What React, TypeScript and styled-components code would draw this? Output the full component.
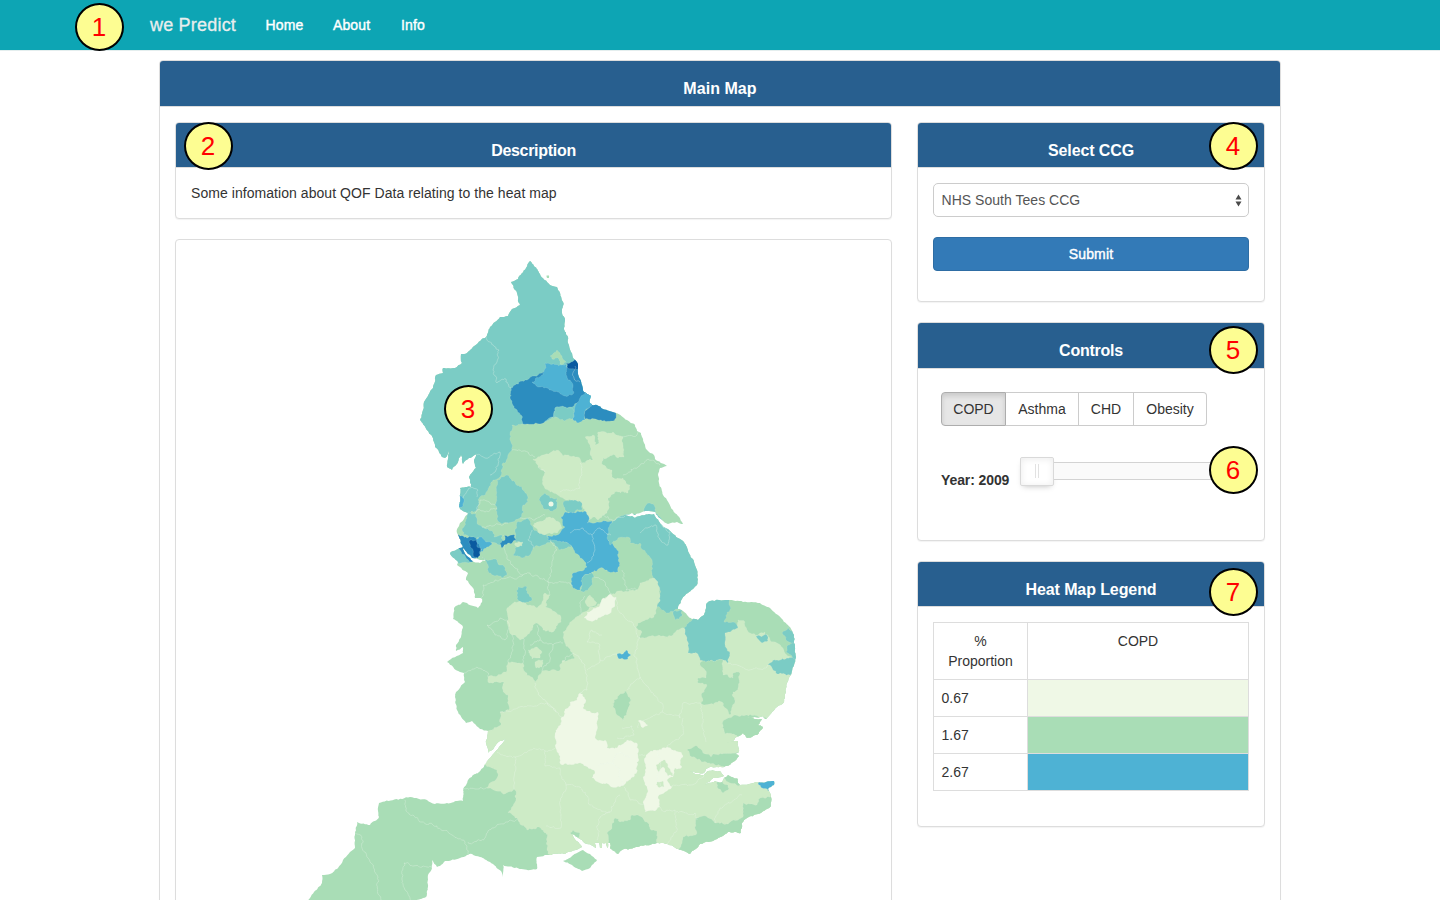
import React from 'react';
import styled, { createGlobalStyle } from 'styled-components';

const GlobalStyle = createGlobalStyle`
  *, *::before, *::after { box-sizing: border-box; }
  html, body { margin: 0; padding: 0; height: 900px; overflow: hidden; background: #fff; }
  body {
    font-family: "Liberation Sans", Arial, sans-serif;
    font-size: 14px;
    line-height: 20px;
    color: #333;
  }
`;

const Page = styled.div`
  position: relative;
  height: 900px;
  overflow: hidden;
`;

const Navbar = styled.nav`
  display: flex;
  align-items: center;
  height: 51px;
  padding-left: 150px;
  background: #0da5b4;
  border-bottom: 1px solid #e4eeee;
`;

const Brand = styled.a`
  width: 86px;
  margin-right: 29.5px;
  font-size: 18px;
  letter-spacing: 0.2px;
  white-space: nowrap;
  color: #e9eeee;
  -webkit-text-stroke: 0.3px #e9eeee;
`;

const NavLink = styled.a<{ $w: number }>`
  width: ${(p) => p.$w}px;
  margin-right: 29px;
  letter-spacing: 0.12px;
  white-space: nowrap;
  color: #fff;
  -webkit-text-stroke: 0.4px #fff;
`;

const Panel = styled.section<{ $h?: number }>`
  display: flex;
  flex-direction: column;
  height: ${(p) => (p.$h ? `${p.$h}px` : 'auto')};
  background: #fff;
  border: 1px solid #ddd;
  border-radius: 4px;
  box-shadow: 0 1px 1px rgba(0, 0, 0, 0.05);
`;

const MainPanel = styled(Panel)`
  width: 1122px;
  margin: 9px 0 0 159px;
`;

const PanelHeading = styled.h3<{ $h?: number; $spacing?: number }>`
  flex: none;
  height: ${(p) => p.$h ?? 45}px;
  margin: 0;
  padding-top: 18px;
  border-bottom: 1px solid #ddd;
  border-radius: 3px 3px 0 0;
  background: #285f8f;
  color: #fff;
  font-size: 16px;
  font-weight: 700;
  line-height: 20px;
  letter-spacing: ${(p) => p.$spacing ?? -0.1}px;
  text-align: center;
`;

const Columns = styled.div`
  display: flex;
  gap: 25px;
  padding: 15px;
`;

const MainColumn = styled.div`
  display: flex;
  flex-direction: column;
  gap: 20px;
  width: 717px;
`;

const SideColumn = styled.div`
  display: flex;
  flex-direction: column;
  gap: 20px;
  width: 348px;
`;

const PanelBody = styled.div`
  padding: 15px;
`;

const Description = styled.p`
  margin: 0;
  letter-spacing: 0.055px;
`;

const ControlsBody = styled.div`
  padding: 23px 7px 0 23px;
`;

const SelectBox = styled.div`
  display: flex;
  align-items: center;
  justify-content: space-between;
  height: 34px;
  padding: 0 6px 0 7.5px;
  border: 1px solid #ccc;
  border-radius: 5px;
  color: #555;
  letter-spacing: 0.03px;
`;

const SubmitButton = styled.button`
  display: block;
  width: 100%;
  height: 34px;
  margin-top: 20px;
  padding: 0;
  border: 1px solid #2e6da4;
  border-radius: 4px;
  background: #337ab7;
  color: #fff;
  font: inherit;
  letter-spacing: 0.12px;
  -webkit-text-stroke: 0.4px #fff;
`;

const ButtonGroup = styled.div`
  display: flex;
`;

const ToggleButton = styled.button<{ $w: number; $active?: boolean }>`
  width: ${(p) => p.$w}px;
  height: 34px;
  padding: 0;
  border: 1px solid ${(p) => (p.$active ? '#adadad' : '#ccc')};
  border-left-width: ${(p) => (p.$active ? 1 : 0)}px;
  background: ${(p) => (p.$active ? '#e6e6e6' : '#fff')};
  box-shadow: ${(p) => (p.$active ? 'inset 0 3px 5px rgba(0, 0, 0, 0.125)' : 'none')};
  color: #333;
  font: inherit;
  &:first-child { border-radius: 4px 0 0 4px; }
  &:last-child { border-radius: 0 4px 4px 0; }
`;

const YearRow = styled.div`
  display: flex;
  align-items: flex-start;
  margin-top: 31px;
`;

const YearLabel = styled.label`
  width: 79px;
  padding-top: 13px;
  font-weight: 700;
  letter-spacing: -0.1px;
  white-space: nowrap;
`;

const Slider = styled.div`
  display: flex;
  align-items: center;
  width: 226px;
  height: 28px;
`;

const SliderKnob = styled.div`
  display: flex;
  flex: none;
  align-items: center;
  justify-content: center;
  gap: 2px;
  width: 34px;
  height: 29px;
  border: 1px solid #d9d9d9;
  border-radius: 2px;
  background: #fff;
  box-shadow: inset 0 0 1px #fff, inset 0 1px 7px #ebebeb, 0 3px 6px -3px #bbb;
`;

const Grip = styled.span`
  width: 1px;
  height: 14px;
  background: #e2e2e2;
`;

const SliderTrack = styled.div`
  flex: 1;
  height: 18px;
  border: 1px solid #d3d3d3;
  border-left: 0;
  background: #fafafa;
`;

const LegendTable = styled.table`
  width: 316px;
  border-collapse: collapse;
  table-layout: fixed;
  td, th {
    height: 37px;
    padding: 8px 7.5px;
    border: 1px solid #ddd;
    font-weight: 400;
    vertical-align: top;
  }
  th { height: 57px; text-align: center; }
  th:first-child { width: 94px; }
`;

const Swatch = styled.td<{ $color: string }>`
  background: ${(p) => p.$color};
`;

const Badge = styled.div<{ $x: number; $y: number }>`
  position: absolute;
  left: ${(p) => p.$x}px;
  top: ${(p) => p.$y}px;
  display: flex;
  align-items: center;
  justify-content: center;
  width: 49px;
  height: 48px;
  padding-right: 1px;
  border: 2px solid #000;
  border-radius: 50%;
  background: #fdfd92;
  color: #f00;
  font-size: 26px;
  line-height: 28px;
`;

const MapSvg = styled.svg`
  display: block;
  width: 715px;
  height: 680px;
`;

const C = {
  pale: '#eff8e6',
  light: '#cdebc6',
  green: '#a9ddb6',
  teal: '#7bccc5',
  sky: '#4eb2d4',
  blue: '#2c8dbf',
  navy: '#0a5aa0',
};

type Pt = [number, number];

const parse = (s: string): Pt[] =>
  s.trim().split(/\s+/).map((p) => p.split(',').map(Number) as Pt);

const noise = (x: number, y: number) => {
  const v = Math.sin(x * 12.9898 + y * 78.233) * 43758.5453;
  return (v - Math.floor(v)) * 2 - 1;
};

// Splits a segment at displaced midpoints; the order of its ends does not change the result.
const split = (a: Pt, b: Pt, k: number): Pt[] => {
  const dx = Math.abs(b[0] - a[0]);
  const dy = Math.abs(b[1] - a[1]);
  const len = Math.hypot(dx, dy);
  if (len < 2.4) return [a];
  const mx = (a[0] + b[0]) / 2;
  const my = (a[1] + b[1]) / 2;
  const n = noise(mx, my) * k * Math.min(len, 5);
  const m: Pt = [mx + (n * dy) / len, my + n * (dx / len) * ((b[0] - a[0]) * (b[1] - a[1]) > 0 ? -1 : 1)];
  return [...split(a, m, k), ...split(m, b, k)];
};

const rough = (s: string, k = 0.26, close = true) => {
  const pts = parse(s);
  const out: Pt[] = [];
  const n = close ? pts.length : pts.length - 1;
  for (let i = 0; i < n; i++) out.push(...split(pts[i], pts[(i + 1) % pts.length], k));
  if (!close) out.push(pts[pts.length - 1]);
  return 'M' + out.map((p) => `${p[0].toFixed(1)},${p[1].toFixed(1)}`).join('L') + (close ? 'Z' : '');
};

const COAST = `530,261 534,266 540,274 547,282 550,285 557,287 560,293 563,302 562,313 565,321 564,328 568,337 568,343
571,352 574,359 578,364 578,373 582,385 584,392 591,396 590,403 592,405 597,405 603,409 616,413 627,420 635,425 637,431 641,433 644,443
647,450 654,455 655,459 667,466 660,468 658,475 659,483 663,495 673,510 682,522 683,524 677,522 668,524 662,520 655,512
647,511 640,513 635,515 632,513 625,515 632,516 635,518 640,516 648,514 654,514 662,525 672,533 678,538 684,542 689,553
694,562 697,570 697,585 688,593 682,599 678,607 678,609 683,611 687,615 692,619 698,620 704,615 706,605 710,601 728,600 743,602
760,603 770,608 782,619 790,627 794,635 794,643 796,657 791,675 787,683 784,702 777,707 768,717 766,719 758,712
762,717 747,718 762,719 758,725 763,727 757,735 747,738 743,733 735,738 733,741 723,743 738,741 739,752 735,754 739,756
733,762 727,766 717,767 710,767 706,769 704,773 697,773 690,771 697,774 704,775 708,771 720,771 724,776 713,778 705,785 715,781
722,782 724,778 728,775 738,779 739,784 740,785 758,782 774,781 774,785 768,789 771,797 771,806 758,814 747,818 742,823
741,833 728,832 717,839 700,844 690,854 678,849 667,844 657,843 638,847 622,850 618,854 610,848 610,843 608,843 608,848
606,843 602,843 602,848 600,848 599,843 595,843 596,848 587,844 572,834 582,847 565,854 553,854 537,857 537,869 530,870 503,865 503,873 502,877
501,871 490,862 480,857 472,854 467,855 460,858 445,861 440,866 437,867 432,860 432,868 428,875 428,887 426,897 423,898 413,902 413,930
290,930 310,898 314,892 322,883 322,875 330,874 338,868 343,860 355,848 355,833 357,822 370,825 379,817 378,811 379,803
410,797 427,800 435,804 447,803 457,801 463,801 463,790 468,780 483,768 490,758 495,752 506,739 500,741 488,753
486,743 488,731 480,729 472,721 466,723 457,710 455,697 456,692 465,682 464,673 460,672 447,662 463,653 463,647
456,651 456,645 461,637 463,627 453,619 454,608 463,602 478,608 482,602 482,599 475,598 473,588 466,580 468,573
457,565 458,562 450,553 463,547 466,555 471,560 474,562 480,563 486,560 480,560 472,558 463,548 459,537 457,533 460,523 468,513
460,509 460,488 471,487 469,477 476,468 474,460 477,453 469,458 463,464 461,455 458,462 452,470 447,467 449,451
445,458 442,457 435,447 433,438 420,420 423,410 424,402 433,388 436,375 443,373 443,368 455,368 462,363 461,354
467,353 477,344 486,337 490,327 500,317 508,316 512,309 520,305 517,293 511,282 518,279 526,268`;

const ISLANDS = [
  '563,861 572,856 583,850 590,854 597,860 590,868 582,871 572,865',
  '546.5,275.5 549,275.5 549,278 547,278',
];

const REGIONS: [string, string][] = [
  // Northumberland, Cumbria and north Lancashire
  [C.teal, '400,240 610,240 600,362 600,400 577,420 555,417 545,422 522,424 512,425 510,438 512,450 502,465 500,477 493,480 488,490 478,500 477,510 468,514 440,512 440,480 400,470'],
  [C.teal, '497,480 506,475 515,482 528,497 528,502 523,505 524,512 520,518 512,522 508,523 502,524 497,518 497,508 495,505'],
  [C.teal, '468,512 476,514 477,522 482,527 493,532 494,537 502,535 503,540 500,545 490,543 480,538 472,537 463,535 462,530 467,518'],
  [C.teal, '515,532 517,522 528,518 533,527 540,532 547,537 556,541 568,543 571,547 560,550 551,541 543,545 533,548 530,555 522,558 513,555 515,548 523,543 515,540'],
  [C.teal, '445,553 463,542 472,562 458,563'],
  [C.teal, '482,557 490,560 497,560 499,565 503,565 507,575 502,578 495,576 489,573 488,565'],
  [C.teal, '518,587 527,587 527,593 532,600 522,603 519,602 517,595'],
  [C.blue, '511,388 515,385 527,380 535,376 545,372 575,366 582,364 600,395 583,397 577,403 570,407 555,408 553,417 547,420 540,424 523,424 521,415 514,408 510,398'],
  [C.sky, '545,363 567,365 566,375 568,380 573,385 574,392 568,396 558,392 547,388 538,387 532,382 543,375'],
  [C.navy, '566,363 571,362 575,359 582,364 580,368 567,367'],
  [C.green, '550,356 557,350 562,356 566,362 560,364 559,359 552,359'],
  [C.teal, '555,408 563,406 573,409 574,418 565,421 554,416'],
  [C.sky, '583,395 588,392 600,393 592,407 585,411 585,420 578,423 573,420 575,407'],
  [C.blue, '585,411 592,403 597,401 618,411 613,421 585,419'],
  // Yorkshire
  [C.light, '533,459 543,455 557,450 563,456 577,457 582,463 593,460 590,453 590,445 585,437 593,435 595,445 599,443 598,432 613,432 623,438 624,457 618,458 615,455 603,458 603,465 612,470 612,477 623,478 630,485 628,493 618,492 608,498 607,513 598,520 595,517 587,523 585,512 580,502 568,500 560,497 550,492 543,485 545,472 538,467'],
  [C.light, '533,525 550,517 560,523 562,528 545,535 538,532'],
  [C.teal, '539,500 545,493 550,498 557,498 557,507 550,511 543,508'],
  [C.teal, '563,503 572,500 582,503 582,510 570,513 565,510'],
  [C.teal, '644,512 646,505 650,503 655,507 656,512'],
  [C.sky, '561,517 565,512 575,513 585,511 589,517 587,523 595,523 612,521 611,535 608,540 617,550 620,563 618,572 607,570 600,568 592,572 582,578 583,583 580,590 572,586 572,574 580,571 587,567 586,563 580,558 573,548 568,543 548,540 547,536 560,533 565,527'],
  [C.teal, '582,578 592,572 594,577 590,587 584,592 580,590'],
  // Merseyside and Manchester
  [C.blue, '456,535 467,538 472,537 477,540 482,547 478,557 472,562 460,550'],
  [C.navy, '470,540 476,540 477,547 481,548 478,558 474,557 473,550'],
  [C.sky, '477,539 482,537 486,542 492,543 487,547 482,552 480,547'],
  [C.blue, '503,535 515,535 516,540 508,543 502,548 500,543 505,540'],
  [C.light, '515,543 523,542 522,546 517,547'],
  [C.sky, '458,493 463,498 463,506 458,508'],
  // Lincolnshire
  [C.teal, '612,523 625,514.5 655,512.8 663,523 676,529 715,545 715,590 682,600 678,609 668,613 657,607 659,597 657,582 653,577 652,560 643,550 640,543 630,543 630,538 618,538 610,545 607,538'],
  // Midlands, East Anglia and the South
  [C.light, '618,591 637,590 640,583 653,578 658,582 660,597 657,607 654,617 638,623 636,627 642,632 640,638 657,636 673,635 677,630 684,628 687,638 688,653 698,654 703,661 723,660 728,663 730,653 725,642 725,633 733,630 738,620 745,622 750,633 758,635 765,632 770,640 783,648 787,655 805,660 805,900 553,864 547,850 546,833 537,827 527,830 518,819 508,813 516,798 514,789 502,793 486,788 497,778 497,770 490,767 484,765 478,760 480,732 488,731 501,725 500,712 509,710 508,695 503,690 504,682 489,683 488,677 507,670 508,662 523,663 525,672 535,683 542,671 560,670 562,661 575,658 573,653 565,643 563,632 573,620 584,612 600,604'],
  [C.light, '507,608 518,602 530,605 537,608 542,602 545,593 550,595 545,607 560,615 561,622 553,632 543,630 537,623 530,632 520,640 512,635 507,623'],
  [C.light, '528,650 537,647 542,652 540,658 532,659'],
  [C.light, '535,662 543,660 542,667 536,668'],
  [C.light, '587,598 590,595 594,600 597,603 589,607 586,604'],
  [C.pale, '584,618 587,612 600,605 603,598 610,594 616,597 615,605 607,615 598,618 590,621'],
  [C.teal, '692,620 700,590 728,595 730,610 724,622 733,622 738,628 725,633 725,642 730,653 728,663 723,660 703,661 698,654 688,653 687,638 684,628'],
  [C.teal, '673,612 682,610 682,616 675,620'],
  [C.teal, '768,665 777,660 800,657 800,675 790,675 777,674'],
  [C.teal, '782,633 788,627 800,635 796,643 787,641'],
  [C.teal, '788,645 800,643 800,660 786,652'],
  [C.teal, '756,636 767,635 768,641 762,643'],
  [C.green, '703,661 723,660 723,675 733,678 733,673 740,673 738,688 733,692 735,702 730,715 722,702 710,704 701,703 702,693 707,685 698,683 698,678 706,678 705,670 700,665'],
  [C.green, '724,720 735,715 770,718 765,735 745,742 735,735 725,734 723,725'],
  [C.green, '614,700 625,691 631,700 627,712 623,721 617,715 613,707'],
  [C.green, '687,750 697,746 703,753 711,757 713,754 742,754 728,768 715,765 703,762 692,757'],
  [C.pale, '638,721 643,721 648,725 643,728'],
  [C.pale, '580,693 586,701 583,708 592,713 598,712 597,730 595,738 605,740 607,748 617,748 627,740 637,743 639,760 637,772 620,787 600,783 592,778 595,772 583,764 562,765 557,752 555,735 562,717 568,708 570,702 577,700'],
  [C.pale, '646,755 655,750 667,747 680,752 683,757 680,765 682,767 675,768 673,777 667,780 672,787 665,792 658,797 660,807 645,812 643,802 647,793 645,783 643,777 645,770'],
  [C.light, '656,765 665,760 668,765 673,776 668,776 663,767 659,772'],
  [C.light, '657,782 663,781 664,787 658,787'],
  [C.sky, '617,654 623,654 626,650 631,655 628,659 620,659'],
  [C.sky, '758,784 758,776 780,774 780,785 768,791 762,788'],
  [C.green, '743,803 757,805 760,798 780,795 780,820 745,845 700,850 690,860 678,852 683,837 697,833 696,818 703,816 715,823 728,824 743,817'],
  [C.green, '717,782 728,785 729,789 723,793 717,787'],
  [C.green, '724,778 728,773 740,778 740,785 730,783'],
  [C.green, '607,833 615,818 620,822 630,820 632,815 638,815 648,823 650,829 657,831 657,850 618,860 608,850'],
  [C.green, '570,833 573,830 580,833 578,838'],
];

const BORDERS = [
  '486,337 490,342 499,350 497,362 493,370 497,383 506,379 511,388',
  '477,455 485,458 500,452 496,470 490,475',
  '512,450 523,451 535,457',
  '405,800 406,811 421,822 437,826 452,835 465,842 468,854',
  '468,842 485,838 492,828 508,822 518,819',
  '463,790 475,789 486,788',
  '355,833 362,837 362,848 370,862 378,877 380,902',
  '432,868 422,867 404,863 402,880 405,890 413,902',
  '500,712 515,709 535,706 548,703 556,712 562,717',
  '514,789 515,757 530,750 545,751 555,748',
  '515,757 497,752',
  '545,751 545,766 560,768 566,785 562,797 560,812 561,828 546,826',
  '566,785 580,787 590,805 610,812 620,795',
  '610,812 600,818 597,840',
  '562,661 573,653 585,665 587,690 580,693',
  '587,670 600,660 617,654',
  '535,683 540,696 556,712',
  '616,597 620,613 632,622 640,638',
  '600,660 600,645 587,642 592,630 602,635',
  '640,638 635,652 636,662 640,677 627,690',
  '640,677 650,690 662,703 662,712 640,722 638,728',
  '662,712 680,718 683,703 700,703 702,725 706,742',
  '683,718 682,735 672,742 667,747',
  '622,728 632,726 634,735 617,738',
  '639,755 645,755',
  '660,807 665,812 675,810 676,832 667,844',
  '676,812 695,813 697,820',
  '715,823 720,808 742,795',
  '672,787 690,785 704,775',
  '464,673 477,667 487,672 488,677',
  '482,602 483,585 495,580 513,578 530,573 548,582 563,582 573,586',
  '505,545 508,560 523,575',
  '550,540 557,550 548,582',
  '548,582 550,595',
  '487,625 500,618 508,622 505,640 495,635 487,625',
  '512,635 513,650 508,662',
  '523,638 525,650 523,663',
  '537,625 540,640 530,645',
  '540,640 553,645 550,660 542,671',
  '553,645 563,643',
  '585,596 580,606 582,615',
  '594,577 605,582 612,594',
  '622,570 626,590 637,590',
  '538,467 545,472',
  '560,492 580,488 582,475 580,463',
  '603,515 612,520 625,516',
  '623,475 640,465 648,459 660,465',
  '622,437 637,435 642,430',
  '611,535 600,528 592,535 583,528 570,533',
  '592,535 595,550 587,563',
  '640,533 650,527 656,525 660,540 668,545 670,532 662,525',
  '475,513 480,500 495,505',
  '463,498 470,488 478,490 477,497',
  '477,510 485,512 497,508',
  '482,527 495,525 508,523',
  '520,518 535,520 545,515',
  '532,530 528,540 533,548',
  '575,366 574,378 580,382',
  '728,663 745,669 760,669 768,665',
  '598,765 610,763 620,770 622,786',
  '612,764 620,752 630,757',
  '624,787 630,800 645,805',
  '657,750 660,765 657,780 665,790',
];

function EnglandMap() {
  const coast = rough(COAST, 0.14);
  const islands = ISLANDS.map((s) => rough(s, 0.1)).join('');
  return (
    <MapSvg viewBox="176 240 715 680" role="img">
      <defs>
        <clipPath id="land">
          <path d={coast} />
        </clipPath>
      </defs>
      <path d={coast + islands} fill={C.green} />
      <g clipPath="url(#land)">
        {REGIONS.map(([fill, pts], i) => (
          <path key={i} d={rough(pts)} fill={fill} stroke="#e4f4e4" strokeOpacity={0.3} strokeWidth={0.5} />
        ))}
        {BORDERS.map((pts, i) => (
          <path key={i} d={rough(pts, 0.28, false)} fill="none" stroke="#f0faf0" strokeOpacity={0.38} strokeWidth={0.8} />
        ))}
      </g>
      <circle cx={551} cy={504} r={2.5} fill={C.pale} />
    </MapSvg>
  );
}

const LEGEND: [string, string][] = [
  ['0.67', C.pale],
  ['1.67', C.green],
  ['2.67', C.sky],
];

const BADGES: [number, number][] = [
  [75, 3],
  [184, 122],
  [444, 385],
  [1209, 122],
  [1209, 326],
  [1209, 446],
  [1209, 568],
];

export default function App() {
  return (
    <Page>
      <GlobalStyle />
      <Navbar>
        <Brand>we Predict</Brand>
        <NavLink $w={38.5}>Home</NavLink>
        <NavLink $w={39}>About</NavLink>
        <NavLink $w={24}>Info</NavLink>
      </Navbar>
      <MainPanel $h={900}>
        <PanelHeading $h={46} $spacing={0.05}>Main Map</PanelHeading>
        <Columns>
          <MainColumn>
            <Panel $h={97}>
              <PanelHeading $spacing={-0.3}>Description</PanelHeading>
              <PanelBody>
                <Description>Some infomation about QOF Data relating to the heat map</Description>
              </PanelBody>
            </Panel>
            <Panel $h={682}>
              <EnglandMap />
            </Panel>
          </MainColumn>
          <SideColumn>
            <Panel $h={180}>
              <PanelHeading>Select CCG</PanelHeading>
              <PanelBody>
                <SelectBox>
                  NHS South Tees CCG
                  <svg width="7" height="13" viewBox="0 0 7 13">
                    <path d="M3.5 0.5L6.5 5.5H0.5ZM3.5 12.5L6.5 7.5H0.5Z" fill="#4a4a4a" />
                  </svg>
                </SelectBox>
                <SubmitButton>Submit</SubmitButton>
              </PanelBody>
            </Panel>
            <Panel $h={219}>
              <PanelHeading $h={46} $spacing={-0.25}>Controls</PanelHeading>
              <ControlsBody>
                <ButtonGroup>
                  <ToggleButton $w={65} $active>COPD</ToggleButton>
                  <ToggleButton $w={73}>Asthma</ToggleButton>
                  <ToggleButton $w={55}>CHD</ToggleButton>
                  <ToggleButton $w={73}>Obesity</ToggleButton>
                </ButtonGroup>
                <YearRow>
                  <YearLabel>Year: 2009</YearLabel>
                  <Slider>
                    <SliderKnob>
                      <Grip />
                      <Grip />
                    </SliderKnob>
                    <SliderTrack />
                  </Slider>
                </YearRow>
              </ControlsBody>
            </Panel>
            <Panel $h={266}>
              <PanelHeading>Heat Map Legend</PanelHeading>
              <PanelBody>
                <LegendTable>
                  <thead>
                    <tr>
                      <th>% Proportion</th>
                      <th>COPD</th>
                    </tr>
                  </thead>
                  <tbody>
                    {LEGEND.map(([label, color]) => (
                      <tr key={label}>
                        <td>{label}</td>
                        <Swatch $color={color} />
                      </tr>
                    ))}
                  </tbody>
                </LegendTable>
              </PanelBody>
            </Panel>
          </SideColumn>
        </Columns>
      </MainPanel>
      {BADGES.map(([x, y], i) => (
        <Badge key={i} $x={x} $y={y}>{i + 1}</Badge>
      ))}
    </Page>
  );
}
